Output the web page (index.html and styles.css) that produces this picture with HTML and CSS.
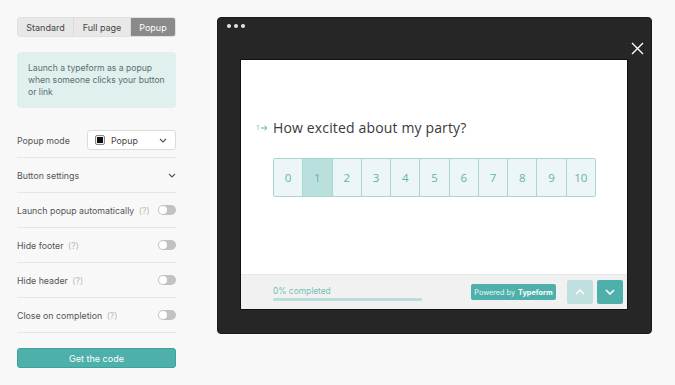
FILE: index.html
```html
<!DOCTYPE html>
<html>
<head>
<meta charset="utf-8">
<link rel="stylesheet" href="styles.css">
</head>
<body>
<div class="page">
  <aside class="panel">
    <div class="tabs">
      <div class="tab">Standard</div>
      <div class="tab">Full page</div>
      <div class="tab active">Popup</div>
    </div>
    <div class="info">Launch a typeform as a popup when someone clicks your button or link</div>
    <div class="rows">
      <div class="row">
        <span class="label">Popup mode</span>
        <div class="select">
          <span class="sq"><span></span></span>
          <span class="sel-text">Popup</span>
          <svg class="chev" width="8" height="5" viewBox="0 0 8 5"><path d="M1 1 L4 4 L7 1" fill="none" stroke="#555" stroke-width="1.1"/></svg>
        </div>
      </div>
      <div class="row">
        <span class="label">Button settings</span>
        <svg class="chev" width="8" height="5" viewBox="0 0 8 5"><path d="M1 1 L4 4 L7 1" fill="none" stroke="#555" stroke-width="1.1"/></svg>
      </div>
      <div class="row">
        <span class="label">Launch popup automatically <span class="q">(?)</span></span>
        <span class="toggle"></span>
      </div>
      <div class="row">
        <span class="label">Hide footer <span class="q">(?)</span></span>
        <span class="toggle"></span>
      </div>
      <div class="row">
        <span class="label">Hide header <span class="q">(?)</span></span>
        <span class="toggle"></span>
      </div>
      <div class="row">
        <span class="label">Close on completion <span class="q">(?)</span></span>
        <span class="toggle"></span>
      </div>
    </div>
    <div class="cta">Get the code</div>
  </aside>
  <section class="preview">
    <div class="dots"><span></span><span></span><span></span></div>
    <svg class="close" width="13" height="13" viewBox="0 0 13 13"><path d="M1 1 L12 12 M12 1 L1 12" stroke="#fff" stroke-width="1.4"/></svg>
    <div class="frame">
      <div class="content">
        <div class="question">
          <span class="num">1<svg width="7" height="6" viewBox="0 0 7 6"><path d="M0 3 H6 M3.5 0.6 L6 3 L3.5 5.4" fill="none" stroke="#5fb3ad" stroke-width="1"/></svg></span>
          <span class="qtext">How excited about my party?</span>
        </div>
        <div class="scale">
          <div class="cell">0</div>
          <div class="cell sel">1</div>
          <div class="cell">2</div>
          <div class="cell">3</div>
          <div class="cell">4</div>
          <div class="cell">5</div>
          <div class="cell">6</div>
          <div class="cell">7</div>
          <div class="cell">8</div>
          <div class="cell">9</div>
          <div class="cell">10</div>
        </div>
      </div>
      <div class="footer">
        <div class="progress">
          <div class="ptext">0% completed</div>
          <div class="bar"></div>
        </div>
        <div class="badge">Powered by <b>Typeform</b></div>
        <div class="navs">
          <div class="nav up"><svg width="10" height="6" viewBox="0 0 10 6"><path d="M1 5 L5 1 L9 5" fill="none" stroke="#fff" stroke-width="1.4"/></svg></div>
          <div class="nav down"><svg width="10" height="6" viewBox="0 0 10 6"><path d="M1 1 L5 5 L9 1" fill="none" stroke="#fff" stroke-width="1.6"/></svg></div>
        </div>
      </div>
    </div>
  </section>
</div>
</body>
</html>
```
FILE: styles.css
```css
* { box-sizing: border-box; }
html, body { margin: 0; padding: 0; }
body {
  background: #f8f8f8;
  font-family: Inter, "Liberation Sans", sans-serif;
  color: #4a4a4a;
  width: 675px;
  height: 385px;
  overflow: hidden;
}
.page {
  display: flex;
  gap: 41px;
  padding: 17px;
}
.panel {
  width: 159px;
  display: flex;
  flex-direction: column;
}
.tabs {
  display: flex;
  height: 20px;
  background: #e8e8e8;
  border-radius: 3px;
  border: 1px solid #e0e0e0;
  overflow: hidden;
  font-size: 9px;
}
.tab {
  display: flex;
  align-items: center;
  justify-content: center;
  color: #444;
  border-right: 1px solid #dadada;
}
.tab:nth-child(1) { width: 56px; }
.tab:nth-child(2) { width: 57px; }
.tab:nth-child(3) { flex: 1; border-right: none; }
.tab.active { background: #8a8a8a; color: #fff; }
.info {
  margin-top: 15px;
  background: #dff0ef;
  border-radius: 4px;
  padding: 10px 11px 9px;
  font-size: 8.6px;
  line-height: 12px;
  color: #5c6e6d;
  height: 56px;
}
.rows { margin-top: 15px; display: flex; flex-direction: column; }
.row {
  height: 35px;
  border-bottom: 1px solid #e6e6e6;
  display: flex;
  align-items: center;
  justify-content: space-between;
  font-size: 8.8px;
  color: #555;
}
.q { color: #b8b8b8; margin-left: 2px; }
.select {
  width: 89px;
  height: 20px;
  background: #fff;
  border: 1px solid #dcdcdc;
  border-radius: 3px;
  display: flex;
  align-items: center;
  padding: 0 8px 0 7px;
  font-size: 8.8px;
  color: #444;
}
.sq {
  width: 10px;
  height: 10px;
  border: 1px solid #888;
  border-radius: 2px;
  display: flex;
  align-items: center;
  justify-content: center;
  margin-right: 6px;
  background: #eee;
}
.sq span { width: 6px; height: 6px; background: #111; }
.sel-text { flex: 1; }
.toggle {
  width: 18px;
  height: 10px;
  border-radius: 5px;
  background: #c2c2c2;
  position: relative;
}
.toggle::after {
  content: "";
  position: absolute;
  left: 1px;
  top: 1px;
  width: 8px;
  height: 8px;
  border-radius: 50%;
  background: #fff;
}
.cta {
  margin-top: 15px;
  height: 20px;
  background: #4eb0aa;
  border: 1px solid #3ea29c;
  border-radius: 3px;
  color: #fff;
  font-size: 9px;
  display: flex;
  align-items: center;
  justify-content: center;
}
.preview {
  width: 435px;
  height: 317px;
  background: #262626;
  border-radius: 4px;
  border: 1px solid #1a1a1a;
  position: relative;
  padding: 41px 23px 23px 22px;
}
.dots { position: absolute; left: 9px; top: 6px; display: flex; gap: 3px; }
.dots span { width: 4px; height: 4px; border-radius: 50%; background: #e4e4e4; }
.close { position: absolute; right: 7px; top: 24px; }
.frame {
  width: 388px;
  height: 251px;
  background: #fff;
  border: 1px solid #111;
  display: flex;
  flex-direction: column;
}
.content {
  flex: 1;
  padding: 58px 0 0 15px;
  font-family: "Open Sans", sans-serif;
}
.question { display: flex; align-items: center; gap: 4px; }
.num { font-size: 7px; color: #5fb3ad; display: flex; align-items: center; gap: 1px; width: 13px; }
.qtext { font-size: 14px; color: #3a3a3a; letter-spacing: 0.15px; }
.scale {
  display: flex;
  margin: 21px 0 0 17px;
  width: 323px;
  height: 39px;
  border: 1px solid #a8d6d2;
  border-radius: 2px;
  overflow: hidden;
}
.cell {
  flex: 1;
  background: #edf6f6;
  border-right: 1px solid #a8d6d2;
  display: flex;
  align-items: center;
  justify-content: center;
  color: #5fb3ad;
  font-size: 11.5px;
}
.cell:last-child { border-right: none; }
.cell.sel { background: #b9e0dd; }
.footer {
  height: 35px;
  background: #f1f1f1;
  border-top: 1px solid #e8e8e8;
  display: flex;
  align-items: center;
  padding: 0 4px 0 32px;
}
.progress { width: 149px; padding-top: 3px; }
.ptext { font-size: 8.4px; color: #74bfba; line-height: 10px; }
.bar { height: 3px; background: #b9dedc; border-radius: 2px; margin-top: 2px; }
.badge {
  margin-left: 49px;
  width: 85px;
  height: 16px;
  background: #4eb0aa;
  border-radius: 2px;
  color: #eaf6f5;
  font-size: 7.3px;
  display: flex;
  align-items: center;
  justify-content: center;
  gap: 3px;
}
.badge b { color: #fff; }
.navs { margin-left: auto; display: flex; gap: 4px; }
.nav {
  width: 26px;
  height: 24px;
  border-radius: 2px;
  display: flex;
  align-items: center;
  justify-content: center;
}
.nav.up { background: #bfe0de; }
.nav.down { background: #4eb0aa; }
```
